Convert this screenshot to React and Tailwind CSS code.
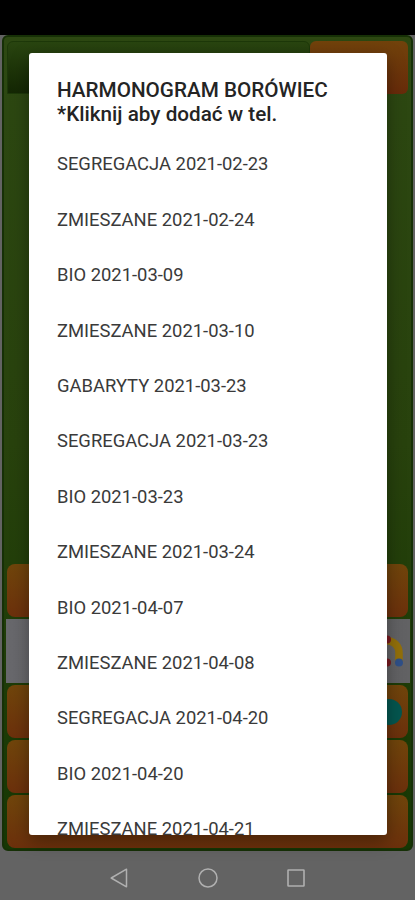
import React from "react";

const schedule = [
  { type: "SEGREGACJA", date: "2021-02-23" },
  { type: "ZMIESZANE", date: "2021-02-24" },
  { type: "BIO", date: "2021-03-09" },
  { type: "ZMIESZANE", date: "2021-03-10" },
  { type: "GABARYTY", date: "2021-03-23" },
  { type: "SEGREGACJA", date: "2021-03-23" },
  { type: "BIO", date: "2021-03-23" },
  { type: "ZMIESZANE", date: "2021-03-24" },
  { type: "BIO", date: "2021-04-07" },
  { type: "ZMIESZANE", date: "2021-04-08" },
  { type: "SEGREGACJA", date: "2021-04-20" },
  { type: "BIO", date: "2021-04-20" },
  { type: "ZMIESZANE", date: "2021-04-21" },
];

const MenuButton = ({ children }) => (
  <div className="h-[53px] shrink-0 rounded-lg bg-gradient-to-b from-[#70450b] to-[#6c300c] flex items-center justify-end pr-1.5">
    {children}
  </div>
);

const AdBanner = () => (
  <div className="h-[64px] shrink-0 -mr-0.5 -ml-px bg-gradient-to-r from-[#68686c] to-[#626264] flex justify-end">
    <svg className="w-10 h-full" viewBox="0 0 40 64" fill="none">
      <path
        d="M13 21.5 H16 C24 21.5 29 27 29 34 V43"
        stroke="#93700a"
        strokeWidth="7.5"
      />
      <circle cx="17" cy="20.5" r="4" fill="#781a20" />
      <circle cx="17" cy="43.5" r="4" fill="#781a20" />
      <circle cx="29" cy="43.5" r="4" fill="#2f5088" />
    </svg>
  </div>
);

const AppBackground = () => (
  <div className="h-[816px] mx-0.5 shrink-0 rounded-md border-2 border-[#163006] bg-gradient-to-b from-[#2d4812] via-[#28420d] to-[#163704] pt-1 px-[3px] flex flex-col">
    <div className="flex justify-between">
      <div className="w-[304px] h-[53px] rounded-t-md border border-[#1d3809] bg-gradient-to-b from-[#294510] to-[#142704]" />
      <div className="w-[98px] h-[53px] rounded-md bg-gradient-to-b from-[#71420b] to-[#682b0a]" />
    </div>
    <div className="flex-1" />
    <div className="flex flex-col pb-px">
      <MenuButton />
      <div className="py-0.5">
        <AdBanner />
      </div>
      <div className="flex flex-col gap-0.5">
        <MenuButton>
          <div className="w-[26px] h-[26px] rounded-full bg-[#04564f]" />
        </MenuButton>
        <MenuButton />
        <MenuButton />
      </div>
    </div>
  </div>
);

const NavigationBar = () => (
  <nav className="flex-1 flex items-center justify-center pt-1 gap-[70px] text-[#b0b0b0]">
    <svg className="w-[18px] h-5" viewBox="0 0 18 20" fill="none" stroke="currentColor" strokeWidth="1.5">
      <path d="M16.5 1.2 V18.8 L1.2 10 Z" strokeLinejoin="round" />
    </svg>
    <svg className="w-5 h-5" viewBox="0 0 20 20" fill="none" stroke="currentColor" strokeWidth="1.5">
      <circle cx="10" cy="10" r="9" />
    </svg>
    <svg className="-ml-px w-[18px] h-[18px]" viewBox="0 0 18 18" fill="none" stroke="currentColor" strokeWidth="1.6">
      <rect x="1" y="1" width="16" height="16" rx="0.5" />
    </svg>
  </nav>
);

const ScheduleDialog = () => (
  <div className="absolute top-[53px] left-[29px] w-[358px] h-[782px] rounded-[3px] bg-white overflow-hidden shadow-[0_6px_18px_rgba(0,0,0,0.35)]">
    <h1 className="h-[83.5px] pt-[25px] pl-7 text-[20.7px] leading-6 font-medium text-[#242424] whitespace-nowrap">
      HARMONOGRAM BORÓWIEC
      <br />
      *Kliknij aby dodać w tel.
    </h1>
    <ul>
      {schedule.map((item) => (
        <li
          key={`${item.type}-${item.date}`}
          className="h-[55.4px] pl-7 flex items-center text-[18.4px] text-[#3a3a3a] whitespace-nowrap"
        >
          {item.type} {item.date}
        </li>
      ))}
    </ul>
  </div>
);

const App = () => {
  return (
    <div className="relative w-full h-[900px] overflow-hidden bg-[#636363] flex flex-col font-['Roboto',sans-serif]">
      <div className="h-[35px] shrink-0 bg-black" />
      <AppBackground />
      <NavigationBar />
      <ScheduleDialog />
    </div>
  );
};

export default App;
